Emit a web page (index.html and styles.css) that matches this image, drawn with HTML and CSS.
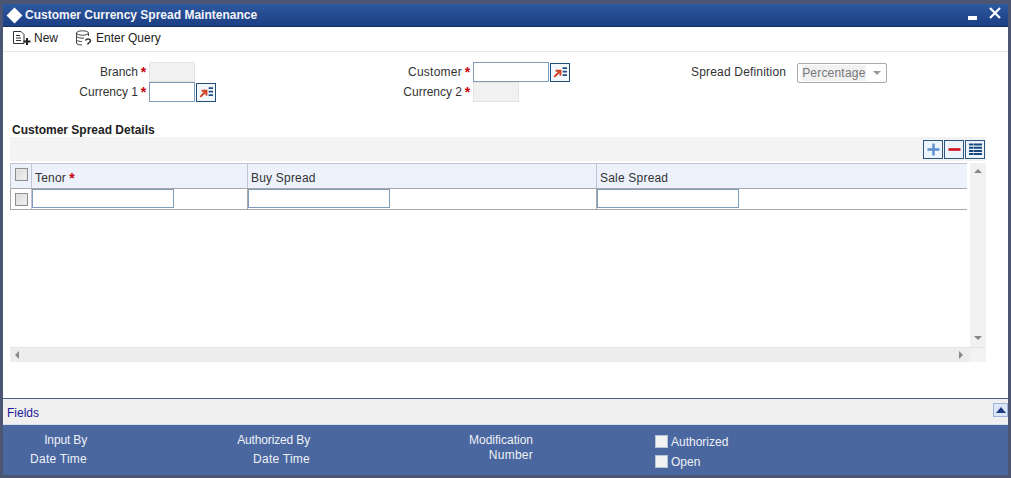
FILE: index.html
```html
<!DOCTYPE html>
<html lang="en">
<head>
<meta charset="utf-8">
<title>Customer Currency Spread Maintenance</title>
<link rel="stylesheet" href="styles.css">
</head>
<body>
<div class="window">
  <header class="titlebar">
    <svg class="logo" width="17" height="17" viewBox="0 0 16 16"><path d="M8 0.500 15.500 8 8 15.500 0.500 8Z" fill="#fff"/></svg>
    <span class="title">Customer Currency Spread Maintenance</span>
    <span class="winbtns">
      <svg width="9" height="4" viewBox="0 0 9 4"><rect width="9" height="4" fill="#fff"/></svg>
      <svg width="12" height="12" viewBox="0 0 12 12"><path d="M1 1 11 11M11 1 1 11" stroke="#fff" stroke-width="2.200" fill="none"/></svg>
    </span>
  </header>
  <nav class="toolbar">
    <span class="tool tool-new">
      <svg width="20" height="16" viewBox="0 0 20 16"><path d="M1.500 1.500H9L12 4.500V13.500H1.500Z M4 5.500H8M4 8H9M4 10.500H9" fill="none" stroke="#333" stroke-width="1"/><path d="M15 8V15M11.500 11.500H18.500" stroke="#222" stroke-width="2"/></svg>
      New
    </span>
    <span class="tool">
      <svg width="17" height="16" viewBox="0 0 17 16"><ellipse cx="7.500" cy="3" rx="6" ry="2.200" fill="none" stroke="#444"/><path d="M1.500 3V13C1.500 14.500 4 15 7 15M13.500 3V6M1.500 6.500C3 8 6 8.300 9 8M1.500 10C3 11.300 5 11.500 7 11.500" fill="none" stroke="#444"/><path d="M10.500 10.500C11 8.500 15 8.500 15.500 10.500C15.800 12.500 13 12.500 12.500 14.500" fill="none" stroke="#333" stroke-width="1.500"/></svg>
      Enter Query
    </span>
  </nav>

  <section class="form">
    <div class="col col-a">
      <div class="row"><label>Branch</label><i class="req">*</i><span class="input off"></span></div>
      <div class="row"><label>Currency 1</label><i class="req">*</i><span class="input"></span><span class="lov"><svg width="18" height="16" viewBox="0 0 18 16"><path d="M2.500 13.500 8 8M4 6.500H9.500V12" fill="none" stroke="#d0401c" stroke-width="2.200"/><path d="M12 3.500H17M12 7.500H17M12 11.500H17" stroke="#1f4e86" stroke-width="2"/></svg></span></div>
    </div>
    <div class="col col-b">
      <div class="row"><label class="wide">Customer</label><i class="req">*</i><span class="input"></span><span class="lov"><svg width="18" height="16" viewBox="0 0 18 16"><path d="M2.500 13.500 8 8M4 6.500H9.500V12" fill="none" stroke="#d0401c" stroke-width="2.200"/><path d="M12 3.500H17M12 7.500H17M12 11.500H17" stroke="#1f4e86" stroke-width="2"/></svg></span></div>
      <div class="row"><label>Currency 2</label><i class="req">*</i><span class="input off"></span></div>
    </div>
    <div class="col col-c">
      <div class="row">
        <label>Spread Definition</label>
        <span class="select"><span class="select-val">Percentage</span><span class="caret"></span></span>
      </div>
    </div>
  </section>

  <h2 class="section">Customer Spread Details</h2>
  <div class="grid-wrap">
    <div class="grid-tools">
      <span class="gbtn"><svg width="15" height="15" viewBox="0 0 15 15"><path d="M7.500 1.500V13.500M1.500 7.500H13.500" stroke="#5b8fd0" stroke-width="2.400"/></svg></span>
      <span class="gbtn"><svg width="15" height="15" viewBox="0 0 15 15"><path d="M1.500 7.500H13.500" stroke="#d0101c" stroke-width="2.600"/></svg></span>
      <span class="gbtn"><svg width="15" height="15" viewBox="0 0 15 15"><path d="M1 2.500H14M1 5.700H14M1 8.900H14M1 12.100H14" stroke="#174a80" stroke-width="2"/><path d="M5.500 1V14" stroke="#fff" stroke-width="1" opacity="0.4"/></svg></span>
    </div>
    <div class="grid-body">
      <div class="table-area">
        <div class="thead">
          <span class="cell c-check"><span class="check"></span></span>
          <span class="cell c-tenor">Tenor<i class="req">*</i></span>
          <span class="cell c-buy">Buy Spread</span>
          <span class="cell c-sale">Sale Spread</span>
        </div>
        <div class="trow">
          <span class="cell c-check"><span class="check"></span></span>
          <span class="cell c-tenor"><span class="input cell-input"></span></span>
          <span class="cell c-buy"><span class="input cell-input"></span></span>
          <span class="cell c-sale"><span class="input cell-input"></span></span>
        </div>
      </div>
      <div class="vscroll"><span class="arr up"></span><span class="arr down"></span></div>
    </div>
    <div class="hscroll"><span class="arr left"></span><span class="arr right"></span></div>
  </div>

  <div class="fields">
    <span class="fields-link">Fields</span>
    <span class="fields-btn"></span>
  </div>
  <footer class="audit">
    <div class="acol acol-1"><span class="narrow">Input By</span><span class="wide">Date Time</span></div>
    <div class="acol acol-2"><span class="narrow">Authorized By</span><span class="wide">Date Time</span></div>
    <div class="acol acol-3"><span>Modification</span><span class="wide">Number</span></div>
    <div class="acol acol-4">
      <span class="chk"><b></b>Authorized</span>
      <span class="chk"><b></b>Open</span>
    </div>
  </footer>
</div>
</body>
</html>
```
FILE: styles.css
```css
* { box-sizing: border-box; }
html, body { margin: 0; height: 100%; }
body {
  background: #4c5572;
  padding: 4px 3px 3px;
  font-family: "Liberation Sans", Arial, sans-serif;
  font-size: 12px;
  color: #333;
  overflow: hidden;
}
.wide { letter-spacing: 0.25px; }
.narrow { letter-spacing: -0.15px; }
.window {
  height: 471px;
  background: #fff;
  display: flex;
  flex-direction: column;
}
.titlebar {
  height: 23px;
  background: linear-gradient(#2f5a9f, #23498f 55%, #1d4084);
  border-bottom: 1px solid #16305f;
  display: flex;
  align-items: center;
  padding-left: 3px;
  color: #fff;
}
.logo { margin-right: 2px; }
.title { font-weight: bold; font-size: 12px; color: #f2f5fa; }
.winbtns {
  margin-left: auto;
  display: flex;
  align-items: center;
  gap: 12px;
  padding-right: 7px;
}
.winbtns svg:first-child { margin-top: 5px; }
.winbtns svg:last-child { margin-top: -4px; }
.toolbar {
  height: 25px;
  border-bottom: 1px solid #e8e8e8;
  display: flex;
  align-items: center;
  gap: 17px;
  padding: 0 0 3px 9px;
  color: #222;
}
.tool { display: flex; align-items: center; gap: 2px; }
.tool + .tool { gap: 4px; }
.form {
  display: flex;
  padding-top: 10px;
  height: 71px;
}
.col { display: flex; flex-direction: column; }
.col-a { width: 400px; }
.col-b { width: 288px; }
.col-c { flex: 1; }
.row { display: flex; align-items: center; height: 20px; }
label { text-align: right; color: #333; white-space: nowrap; flex: 0 0 auto; padding-bottom: 1px; }
.col-a label { width: 135px; }
.col-a .row { padding-left: 0; }
.col-b label { width: 59px; }
.req { color: #c8000a; font-style: normal; font-weight: bold; font-size: 14px; width: 11px; text-align: center; line-height: 12px; }
.input {
  display: block;
  width: 46px;
  height: 20px;
  background: #fff;
  border: 1px solid #7f9db9;
}
.col-b .row:first-child .input { width: 76px; }
.off { background: #f1f1f1; border-color: #e2e2e2; }
.lov {
  width: 20px;
  height: 19px;
  margin-left: 1px;
  border: 1px solid #1f4e79;
  background: #f4f7fb;
  display: flex;
  align-items: center;
  justify-content: center;
}
.lov svg { width: 16px; height: 14px; }
.col-a { flex: 0 0 auto; }
.col-a .req { margin-left: 0; }
.col-c label { margin-right: 11px; letter-spacing: 0.18px; }
.select {
  width: 90px;
  height: 20px;
  border: 1px solid #aaa;
  border-radius: 2px;
  color: #777;
  display: flex;
  align-items: center;
  padding: 0 4px;
  margin-top: 1px;
}
.select-val { background: #f1f1f1; padding: 1px 0; flex: 0 0 auto; letter-spacing: 0.2px; }
.caret {
  margin-left: auto;
  margin-right: 1px;
  border-left: 4px solid transparent;
  border-right: 4px solid transparent;
  border-top: 4px solid #999;
}
.section {
  margin: 0;
  padding-left: 9px;
  font-size: 12px;
  line-height: 14px;
  font-weight: bold;
  color: #222;
  height: 14px;
}
.grid-wrap { margin: 0 0 0 7px; width: 976px; }
.grid-tools {
  height: 24px;
  background: #f3f3f3;
  display: flex;
  justify-content: flex-end;
  align-items: center;
  gap: 1px;
  padding: 0 1px 0 0;
}
.gbtn {
  width: 20px;
  height: 19px;
  border: 1px solid #2b5680;
  background: #eef4fb;
  display: flex;
  align-items: center;
  justify-content: center;
}
.grid-body {
  display: flex;
  justify-content: space-between;
  height: 184px;
  margin-top: 2px;
}
.table-area { width: 957px; }
.thead, .trow { display: flex; width: 957px; }
.thead {
  height: 26px;
  background: #edf1fb;
  border: 1px solid #c0c5d4;
  border-width: 1px 0 1px 1px;
  border-bottom: 1px solid #a8a8a8;
  color: #333;
  letter-spacing: 0.2px;
}
.trow {
  height: 21px;
  border-bottom: 1px solid #a8a8a8;
  border-left: 1px solid #a8a8a8;
}
.cell { display: flex; align-items: center; border-right: 1px solid #c0c5d4; flex: 0 0 auto; }
.thead .cell { padding-left: 3px; padding-top: 3px; }
.c-check { width: 21px; justify-content: center; }
.thead .c-check { padding: 0 0 3px; }
.c-tenor { width: 216px; }
.c-buy { width: 349px; }
.c-sale { flex: 1; border-right: 0; }
.thead .req { width: 10px; margin-left: 1px; }
.trow .cell { border-right-color: #a8a8a8; }
.trow .c-check { border-right-color: #c0c5d4; }
.trow .c-sale { border-right: 0; }
.check {
  width: 13px;
  height: 13px;
  border: 1px solid #8e8f8f;
  background: linear-gradient(135deg, #d8d8d8, #f4f4f4);
  box-shadow: inset 0 0 0 1px #e6e6e6;
}
.cell-input { width: 142px; height: 19px; align-self: flex-start; }
.vscroll {
  width: 16px;
  background: #f1f1f1;
  display: flex;
  flex-direction: column;
  justify-content: space-between;
  align-items: center;
  padding: 6px 0 7px;
}
.hscroll {
  height: 15px;
  background: #ededed;
  border-top: 1px solid #e4e4e4;
  display: flex;
  justify-content: space-between;
  align-items: center;
  padding: 0 23px 0 5px;
  box-shadow: inset -16px 0 0 #f3f3f3;
}
.arr { width: 0; height: 0; display: block; border: 4px solid transparent; }
.up { border-top: 0; border-bottom: 4px solid #888; }
.down { border-bottom: 0; border-top: 4px solid #888; }
.left { border-left: 0; border-right: 4px solid #888; }
.right { border-right: 0; border-left: 4px solid #888; }
.fields {
  margin-top: auto;
  height: 27px;
  background: #f0f0f0;
  border-top: 1px solid #46618f;
  border-bottom: 1px solid #d8e0f0;
  display: flex;
  align-items: center;
  justify-content: space-between;
  padding-left: 4px;
}
.fields-link { color: #1a1a9a; padding-top: 2px; }
.fields-btn {
  width: 15px;
  height: 14px;
  border: 1px solid #9db4dc;
  background: #dbe6f7;
  position: relative;
  margin-top: -4px;
}
.fields-btn::after {
  content: "";
  position: absolute;
  left: 2px;
  top: 3px;
  border-left: 5px solid transparent;
  border-right: 5px solid transparent;
  border-bottom: 6px solid #1c3f82;
}
.audit {
  height: 50px;
  background: #4a679f;
  color: #eef1f7;
  display: flex;
  padding-top: 6px;
}
.acol { display: flex; flex-direction: column; text-align: right; line-height: 19px; }
.acol-1 { width: 84px; }
.acol-2 { width: 223px; }
.acol-3 { width: 223px; line-height: 15px; padding-top: 2px; }
.acol-4 { margin-left: 122px; text-align: left; line-height: 20px; padding-top: 1px; }
.chk { display: flex; align-items: center; gap: 3px; height: 20px; }
.chk b { width: 13px; height: 13px; background: #f2f2f2; border: 1px solid #b8c4d8; display: block; margin-top: -2px; }
```
